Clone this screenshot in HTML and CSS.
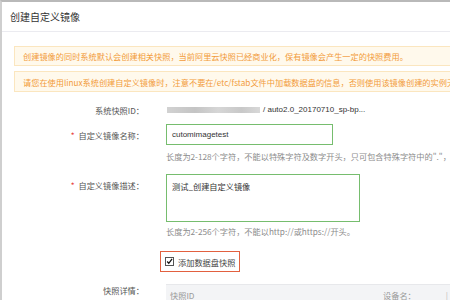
FILE: index.html
```html
<!DOCTYPE html>
<html lang="zh">
<head>
<meta charset="utf-8">
<link rel="stylesheet" href="styles.css">
</head>
<body>
<div class="frame">
  <div class="header">创建自定义镜像</div>
  <div class="alerts">
    <div class="alert a1">创建镜像的同时系统默认会创建相关快照，当前阿里云快照已经商业化，保有镜像会产生一定的快照费用。</div>
    <div class="alert a2">请您在使用linux系统创建自定义镜像时，注意不要在/etc/fstab文件中加载数据盘的信息，否则使用该镜像创建的实例无法启动。</div>
  </div>
  <div class="form">
    <div class="row r-id">
      <div class="label">系统快照ID：</div>
      <div class="field idval"><span class="blur"></span><span class="idtext">/ auto2.0_20170710_sp-bp...</span></div>
    </div>
    <div class="row r-name">
      <div class="label"><span class="req">*</span>自定义镜像名称：</div>
      <div class="field"><div class="input">cutomimagetest</div></div>
    </div>
    <div class="row r-hint1">
      <div class="label"></div>
      <div class="field hint">长度为2-128个字符，不能以特殊字符及数字开头，只可包含特殊字符中的"."，"_"，"-"和"："。</div>
    </div>
    <div class="row r-desc">
      <div class="label"><span class="req">*</span>自定义镜像描述：</div>
      <div class="field"><div class="textarea">测试_创建自定义镜像</div></div>
    </div>
    <div class="row r-hint2">
      <div class="label"></div>
      <div class="field hint">长度为2-256个字符，不能以http://或https://开头。</div>
    </div>
    <div class="row r-check">
      <div class="label"></div>
      <div class="field"><div class="checkbox-box"><span class="cb"><svg width="9" height="9" viewBox="0 0 9 9"><path d="M1.5 4.5 L3.6 6.8 L7.8 1.2" fill="none" stroke="#111" stroke-width="1.6"/></svg></span><span class="cbtext">添加数据盘快照</span></div></div>
    </div>
    <div class="row r-detail">
      <div class="label">快照详情：</div>
      <div class="field"><div class="thead"><span class="th1">快照ID</span><span class="th2">设备名：</span><span class="th3">|</span></div></div>
    </div>
  </div>
</div>
</body>
</html>
```
FILE: styles.css
```css
html, body {
  margin: 0;
  padding: 0;
  background: #fff;
}
body {
  width: 450px;
  height: 300px;
  overflow: hidden;
  font-family: "Noto Sans CJK SC", "Liberation Sans", sans-serif;
}
.frame {
  box-sizing: border-box;
  height: 300px;
  border-top: 2px solid #b9b9b9;
  border-left: 2px solid #cfcfcf;
  overflow: hidden;
}
.header {
  height: 29px;
  line-height: 29px;
  padding-left: 8px;
  font-size: 10px;
  color: #333;
  border-bottom: 1px solid #ebebf0;
}
.alerts {
  padding: 14px 0 0 12px;
}
.alert {
  box-sizing: border-box;
  background: #fff9ec;
  border: 1px solid #fbe6bf;
  border-right: none;
  color: #f29b3a;
  font-size: 8.2px;
  padding-left: 8px;
  white-space: nowrap;
  overflow: hidden;
  display: flex;
  align-items: center;
}
.a1 { height: 20px; margin-bottom: 5px; }
.a2 { height: 21px; }
.form {
  font-size: 8.2px;
  color: #555;
}
.row {
  display: grid;
  grid-template-columns: 164px 1fr;
  align-items: center;
}
.label {
  text-align: right;
  padding-right: 22px;
  line-height: 12px;
  white-space: nowrap;
}
.req {
  color: #e8413a;
  margin-right: 4px;
}
.field {
  white-space: nowrap;
  line-height: 12px;
}
.r-id { margin-top: 12px; }
.idval { display: flex; align-items: center; }
.blur {
  display: inline-block;
  width: 93px;
  height: 6px;
  background: linear-gradient(90deg, #d2d2d2, #c4c4c4 30%, #d6d6d6 55%, #c8c8c8 80%, #d8d8d8);
  filter: blur(0.6px);
  margin-left: 1px;
}
.idtext {
  font-family: "Liberation Sans", sans-serif;
  font-size: 8px;
  color: #333;
  margin-left: 3px;
}
.r-name { margin-top: 8px; }
.input {
  box-sizing: border-box;
  width: 167px;
  height: 21px;
  border: 1px solid #76bd6e;
  padding-left: 5px;
  display: flex;
  align-items: center;
  font-family: "Liberation Sans", sans-serif;
  font-size: 8px;
  color: #333;
}
.hint { color: #8c8c8c; }
.r-hint1 { margin-top: 5px; }
.r-desc { margin-top: 12px; align-items: start; }
.r-desc .label { padding-top: 5px; }
.textarea {
  box-sizing: border-box;
  width: 194px;
  height: 48px;
  border: 1px solid #76bd6e;
  padding: 5px 0 0 5px;
  color: #333;
}
.r-hint2 { margin-top: 3px; }
.r-check { margin-top: 14px; }
.checkbox-box {
  box-sizing: border-box;
  margin-left: -6px;
  width: 80px;
  height: 21px;
  border: 1.5px solid #e2603f;
  display: flex;
  align-items: center;
  padding-left: 4px;
}
.cb {
  box-sizing: border-box;
  width: 9px;
  height: 9px;
  border: 1px solid #555;
  display: flex;
  align-items: center;
  justify-content: center;
  background: #fff;
}
.cb svg { display: block; }
.cbtext {
  margin-left: 4px;
  color: #444;
}
.r-detail { margin-top: 12px; align-items: start; }
.r-detail .label { padding-top: 0px; }
.thead {
  height: 20px;
  background: #f3f4f6;
  border-top: 1px solid #e7e8eb;
  display: flex;
  align-items: center;
  color: #999;
  position: relative;
}
.th1 { margin-left: 4px; }
.th2 { margin-left: auto; margin-right: 30px; }
.th3 { margin-right: 2px; color: #bbb; }
```
